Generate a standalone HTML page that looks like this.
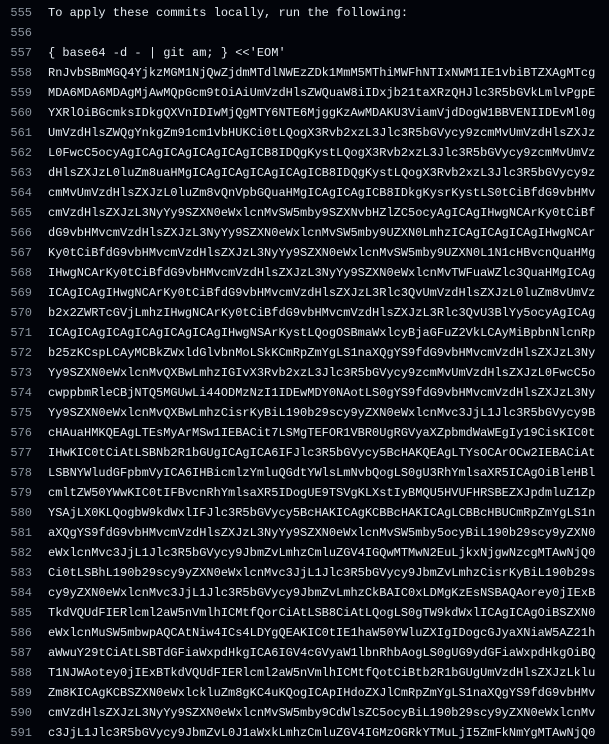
<!DOCTYPE html>
<html><head><meta charset="utf-8"><style>
html,body{margin:0;padding:0;background:#02040a;width:609px;height:744px;overflow:hidden}
.c{padding-top:3px;font-family:"Liberation Mono",monospace;font-size:12px;line-height:20px;color:#e6edf3}
.l{display:flex;white-space:pre;height:20px}
.n{width:32px;text-align:right;color:#8b949e;flex:none}
.t{margin-left:16px}
</style></head><body><div class="c">
<div class="l"><span class="n">555</span><span class="t">To apply these commits locally, run the following:</span></div>
<div class="l"><span class="n">556</span><span class="t"></span></div>
<div class="l"><span class="n">557</span><span class="t">{ base64 -d - | git am; } &lt;&lt;'EOM'</span></div>
<div class="l"><span class="n">558</span><span class="t">RnJvbSBmMGQ4YjkzMGM1NjQwZjdmMTdlNWEzZDk1MmM5MThiMWFhNTIxNWM1IE1vbiBTZXAgMTcg</span></div>
<div class="l"><span class="n">559</span><span class="t">MDA6MDA6MDAgMjAwMQpGcm9tOiAiUmVzdHlsZWQuaW8iIDxjb21taXRzQHJlc3R5bGVkLmlvPgpE</span></div>
<div class="l"><span class="n">560</span><span class="t">YXRlOiBGcmksIDkgQXVnIDIwMjQgMTY6NTE6MjggKzAwMDAKU3ViamVjdDogW1BBVENIIDEvMl0g</span></div>
<div class="l"><span class="n">561</span><span class="t">UmVzdHlsZWQgYnkgZm91cm1vbHUKCi0tLQogX3Rvb2xzL3Jlc3R5bGVycy9zcmMvUmVzdHlsZXJz</span></div>
<div class="l"><span class="n">562</span><span class="t">L0FwcC5ocyAgICAgICAgICAgICAgICB8IDQgKystLQogX3Rvb2xzL3Jlc3R5bGVycy9zcmMvUmVz</span></div>
<div class="l"><span class="n">563</span><span class="t">dHlsZXJzL0luZm8uaHMgICAgICAgICAgICAgICB8IDQgKystLQogX3Rvb2xzL3Jlc3R5bGVycy9z</span></div>
<div class="l"><span class="n">564</span><span class="t">cmMvUmVzdHlsZXJzL0luZm8vQnVpbGQuaHMgICAgICAgICB8IDkgKysrKystLS0tCiBfdG9vbHMv</span></div>
<div class="l"><span class="n">565</span><span class="t">cmVzdHlsZXJzL3NyYy9SZXN0eWxlcnMvSW5mby9SZXNvbHZlZC5ocyAgICAgIHwgNCArKy0tCiBf</span></div>
<div class="l"><span class="n">566</span><span class="t">dG9vbHMvcmVzdHlsZXJzL3NyYy9SZXN0eWxlcnMvSW5mby9UZXN0LmhzICAgICAgICAgIHwgNCAr</span></div>
<div class="l"><span class="n">567</span><span class="t">Ky0tCiBfdG9vbHMvcmVzdHlsZXJzL3NyYy9SZXN0eWxlcnMvSW5mby9UZXN0L1N1cHBvcnQuaHMg</span></div>
<div class="l"><span class="n">568</span><span class="t">IHwgNCArKy0tCiBfdG9vbHMvcmVzdHlsZXJzL3NyYy9SZXN0eWxlcnMvTWFuaWZlc3QuaHMgICAg</span></div>
<div class="l"><span class="n">569</span><span class="t">ICAgICAgIHwgNCArKy0tCiBfdG9vbHMvcmVzdHlsZXJzL3Rlc3QvUmVzdHlsZXJzL0luZm8vUmVz</span></div>
<div class="l"><span class="n">570</span><span class="t">b2x2ZWRTcGVjLmhzIHwgNCArKy0tCiBfdG9vbHMvcmVzdHlsZXJzL3Rlc3QvU3BlYy5ocyAgICAg</span></div>
<div class="l"><span class="n">571</span><span class="t">ICAgICAgICAgICAgICAgICAgIHwgNSArKystLQogOSBmaWxlcyBjaGFuZ2VkLCAyMiBpbnNlcnRp</span></div>
<div class="l"><span class="n">572</span><span class="t">b25zKCspLCAyMCBkZWxldGlvbnMoLSkKCmRpZmYgLS1naXQgYS9fdG9vbHMvcmVzdHlsZXJzL3Ny</span></div>
<div class="l"><span class="n">573</span><span class="t">Yy9SZXN0eWxlcnMvQXBwLmhzIGIvX3Rvb2xzL3Jlc3R5bGVycy9zcmMvUmVzdHlsZXJzL0FwcC5o</span></div>
<div class="l"><span class="n">574</span><span class="t">cwppbmRleCBjNTQ5MGUwLi44ODMzNzI1IDEwMDY0NAotLS0gYS9fdG9vbHMvcmVzdHlsZXJzL3Ny</span></div>
<div class="l"><span class="n">575</span><span class="t">Yy9SZXN0eWxlcnMvQXBwLmhzCisrKyBiL190b29scy9yZXN0eWxlcnMvc3JjL1Jlc3R5bGVycy9B</span></div>
<div class="l"><span class="n">576</span><span class="t">cHAuaHMKQEAgLTEsMyArMSw1IEBACit7LSMgTEFOR1VBR0UgRGVyaXZpbmdWaWEgIy19CisKIC0t</span></div>
<div class="l"><span class="n">577</span><span class="t">IHwKIC0tCiAtLSBNb2R1bGUgICAgICA6IFJlc3R5bGVycy5BcHAKQEAgLTYsOCArOCw2IEBACiAt</span></div>
<div class="l"><span class="n">578</span><span class="t">LSBNYWludGFpbmVyICA6IHBicmlzYmluQGdtYWlsLmNvbQogLS0gU3RhYmlsaXR5ICAgOiBleHBl</span></div>
<div class="l"><span class="n">579</span><span class="t">cmltZW50YWwKIC0tIFBvcnRhYmlsaXR5IDogUE9TSVgKLXstIyBMQU5HVUFHRSBEZXJpdmluZ1Zp</span></div>
<div class="l"><span class="n">580</span><span class="t">YSAjLX0KLQogbW9kdWxlIFJlc3R5bGVycy5BcHAKICAgKCBBcHAKICAgLCBBcHBUCmRpZmYgLS1n</span></div>
<div class="l"><span class="n">581</span><span class="t">aXQgYS9fdG9vbHMvcmVzdHlsZXJzL3NyYy9SZXN0eWxlcnMvSW5mby5ocyBiL190b29scy9yZXN0</span></div>
<div class="l"><span class="n">582</span><span class="t">eWxlcnMvc3JjL1Jlc3R5bGVycy9JbmZvLmhzCmluZGV4IGQwMTMwN2EuLjkxNjgwNzcgMTAwNjQ0</span></div>
<div class="l"><span class="n">583</span><span class="t">Ci0tLSBhL190b29scy9yZXN0eWxlcnMvc3JjL1Jlc3R5bGVycy9JbmZvLmhzCisrKyBiL190b29s</span></div>
<div class="l"><span class="n">584</span><span class="t">cy9yZXN0eWxlcnMvc3JjL1Jlc3R5bGVycy9JbmZvLmhzCkBAIC0xLDMgKzEsNSBAQAorey0jIExB</span></div>
<div class="l"><span class="n">585</span><span class="t">TkdVQUdFIERlcml2aW5nVmlhICMtfQorCiAtLSB8CiAtLQogLS0gTW9kdWxlICAgICAgOiBSZXN0</span></div>
<div class="l"><span class="n">586</span><span class="t">eWxlcnMuSW5mbwpAQCAtNiw4ICs4LDYgQEAKIC0tIE1haW50YWluZXIgIDogcGJyaXNiaW5AZ21h</span></div>
<div class="l"><span class="n">587</span><span class="t">aWwuY29tCiAtLSBTdGFiaWxpdHkgICA6IGV4cGVyaW1lbnRhbAogLS0gUG9ydGFiaWxpdHkgOiBQ</span></div>
<div class="l"><span class="n">588</span><span class="t">T1NJWAotey0jIExBTkdVQUdFIERlcml2aW5nVmlhICMtfQotCiBtb2R1bGUgUmVzdHlsZXJzLklu</span></div>
<div class="l"><span class="n">589</span><span class="t">Zm8KICAgKCBSZXN0eWxlckluZm8gKC4uKQogICApIHdoZXJlCmRpZmYgLS1naXQgYS9fdG9vbHMv</span></div>
<div class="l"><span class="n">590</span><span class="t">cmVzdHlsZXJzL3NyYy9SZXN0eWxlcnMvSW5mby9CdWlsZC5ocyBiL190b29scy9yZXN0eWxlcnMv</span></div>
<div class="l"><span class="n">591</span><span class="t">c3JjL1Jlc3R5bGVycy9JbmZvL0J1aWxkLmhzCmluZGV4IGMzOGRkYTMuLjI5ZmFkNmYgMTAwNjQ0</span></div>
</div></body></html>
